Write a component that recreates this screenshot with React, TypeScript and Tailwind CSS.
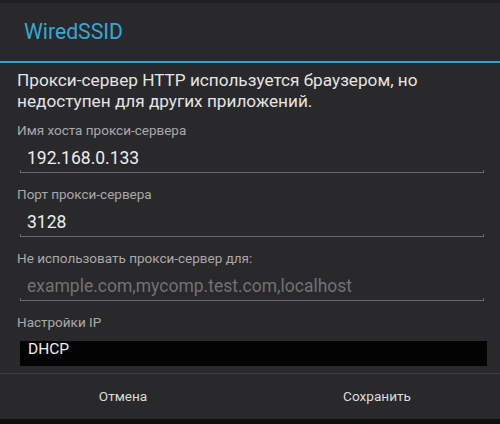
import React from 'react';

const font = { fontFamily: 'Roboto, "Noto Sans", sans-serif' };

const Field = ({ label, value, placeholder }: { label: string; value?: string; placeholder?: string }) => (
  <div>
    <div className="h-[16px] text-[13.5px] leading-[16px] text-[#a9a9ab]">{label}</div>
    <div className="mt-[9px] pl-[10px] pr-[3px]">
      <div className={`h-[22px] text-[17.5px] leading-[22px] ${value ? 'text-[#ededed]' : 'text-[#727274]'}`}>
        {value ?? placeholder}
      </div>
    </div>
    <div className="ml-[3px] mt-[1px] h-[3px] w-[464px] border-x border-b border-[#6a6a6c]" />
  </div>
);

const App: React.FC = () => {
  return (
    <div className="w-[500px] h-[424px] bg-[#29282b] flex flex-col overflow-hidden" style={font}>
      <div className="h-[3px] bg-[#1f1e20]" />
      <div className="h-[58px] flex items-center pl-[24px] text-[21.2px] text-[#37a8d4]">WiredSSID</div>
      <div className="h-[2px] bg-[#33a2cc]" />
      <div className="h-[1px] bg-[#1c1b1d]" />

      <div className="px-[17px] flex-1">
        <p className="mt-[6px] text-[17.2px] leading-[21px] text-[#e4e4e4]">
          Прокси-сервер HTTP используется браузером, но недоступен для других приложений.
        </p>

        <div className="mt-[10px] flex flex-col gap-[13px]">
          <Field label="Имя хоста прокси-сервера" value="192.168.0.133" />
          <Field label="Порт прокси-сервера" value="3128" />
          <Field label="Не использовать прокси-сервер для:" placeholder="example.com,mycomp.test.com,localhost" />
        </div>

        <div className="mt-[13px] h-[16px] text-[13.5px] leading-[16px] text-[#a9a9ab]">Настройки IP</div>
        <div className="mt-[11px] ml-[3px] w-[467px] h-[25px] bg-[#030304] pl-[8px] text-[15.5px] leading-[16px] text-[#f0f0f0]">
          DHCP
        </div>
      </div>

      <div className="h-[1px] bg-[#3d3c3f]" />
      <div className="h-[45px] flex text-[13.6px] text-[#dcdcdc]">
        <button className="flex-1 flex items-center justify-center pr-[6px]">Отмена</button>
        <button className="flex-1 flex items-center justify-center pl-[2px]">Сохранить</button>
      </div>
      <div className="h-[5px] bg-[#0f0f10]" />
    </div>
  );
};

export default App;
